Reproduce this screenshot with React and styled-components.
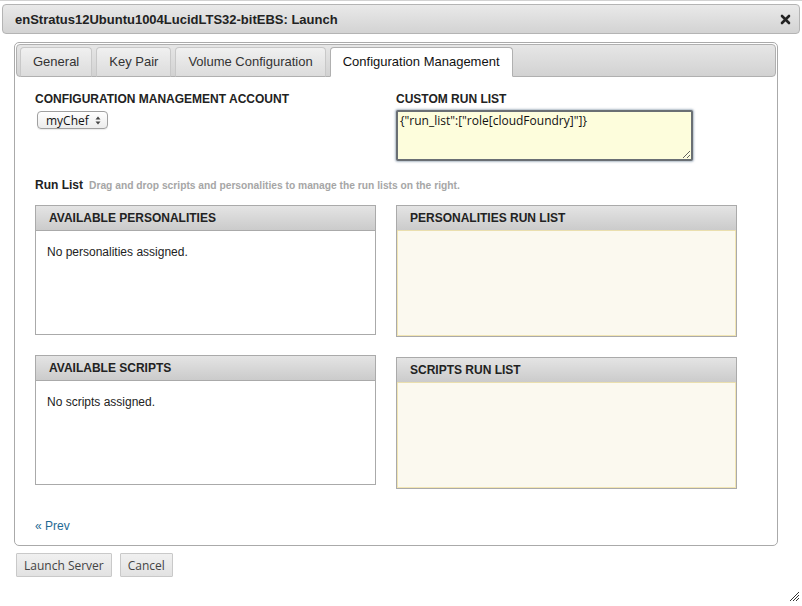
import React from "react";
import styled, { createGlobalStyle } from "styled-components";

const Global = createGlobalStyle`
  html, body { margin: 0; padding: 0; background: #fff; }
  body { font-family: "Liberation Sans", Arial, sans-serif; color: #222; }
  * { box-sizing: border-box; }
`;

const Dialog = styled.div`
  position: relative;
  width: 802px;
  height: 606px;
  border-top: 1px solid #d2d2d2;
  padding: 3px 2px 0;
  background: #fff;
  overflow: hidden;
`;

const TitleBar = styled.div`
  height: 30px;
  display: flex;
  align-items: center;
  justify-content: space-between;
  padding: 0 8px 0 12px;
  border: 1px solid #b4b4b4;
  border-radius: 4px;
  background: linear-gradient(#e9e9e9, #d3d3d3);
`;

const Title = styled.div`
  font-weight: bold;
  font-size: 13px;
  color: #222;
`;

const Body = styled.div`
  padding: 8px 0 0 12px;
`;

const TabPanel = styled.div`
  width: 764px;
  border: 1px solid #aaa;
  border-radius: 5px;
  padding: 1px;
`;

const TabStrip = styled.div`
  height: 33px;
  display: flex;
  gap: 4px;
  padding: 2px 3px 0;
  border: 1px solid #b0b0b0;
  border-radius: 4px;
  background: linear-gradient(#e6e6e6, #d2d2d2);
`;

const Tab = styled.div`
  height: 30px;
  margin-bottom: -1px;
  padding: 0 12px 1px;
  display: flex;
  align-items: center;
  font-size: 13px;
  color: ${(p) => (p.$active ? "#111" : "#333")};
  border: 1px solid ${(p) => (p.$active ? "#b0b0b0" : "#c8c8c8")};
  border-bottom-color: ${(p) => (p.$active ? "#fff" : "#b0b0b0")};
  border-radius: 4px 4px 0 0;
  background: ${(p) => (p.$active ? "#fff" : "linear-gradient(#f0f0f0, #dcdcdc)")};
`;

const TabContent = styled.div`
  padding: 15px 19px 10px 19px;
`;

const TwoCol = styled.div`
  display: grid;
  grid-template-columns: 341px 341px;
  column-gap: 20px;
  row-gap: ${(p) => p.$rowGap || 0}px;
  align-items: start;
`;

const Field = styled.div`
  display: flex;
  flex-direction: column;
  align-items: flex-start;
`;

const Label = styled.div`
  font-size: 12px;
  line-height: 14px;
  font-weight: bold;
  color: #222;
  margin-bottom: ${(p) => p.$gap}px;
`;

const SelectBox = styled.div`
  margin-left: 2px;
  height: 18px;
  width: 71px;
  display: flex;
  align-items: center;
  justify-content: space-between;
  padding: 0 6px 0 8px;
  border: 1px solid #a0a0a0;
  border-radius: 4px;
  background: linear-gradient(#ffffff, #ececec);
  box-shadow: 0 1px 1px rgba(0, 0, 0, 0.08);
  font-family: "Open Sans", "DejaVu Sans", sans-serif;
  font-size: 12px;
  color: #111;
`;

const TextArea = styled.textarea`
  width: 297px;
  height: 51px;
  margin: 0;
  padding: 1px 2px;
  border: 2px solid #6a6f74;
  border-radius: 2px;
  background: #fdfddc;
  box-shadow: 0 0 2px 1px rgba(120, 140, 160, 0.6);
  font-family: "Open Sans", "DejaVu Sans", sans-serif;
  font-size: 12px;
  line-height: 15px;
  color: #111;
  outline: none;
  resize: both;
`;

const RunHeading = styled.div`
  margin: 17px 0 12px;
  display: flex;
  align-items: baseline;
  gap: 6px;
  line-height: 14px;
`;

const RunTitle = styled.span`
  font-size: 12px;
  font-weight: bold;
  color: #222;
`;

const Hint = styled.span`
  font-size: 10.25px;
  font-weight: bold;
  color: #a6a6a6;
`;

const ListBox = styled.div`
  height: ${(p) => (p.$run ? 132 : 130)}px;
  margin-top: ${(p) => p.$shift || 0}px;
  border: 1px solid #aaa;
  display: flex;
  flex-direction: column;
  background: ${(p) => (p.$run ? "#fbf9ef" : "#fff")};
`;

const ListHeader = styled.div`
  height: 25px;
  flex: none;
  display: flex;
  align-items: center;
  padding-left: 13px;
  font-size: 12px;
  font-weight: bold;
  color: #222;
  background: linear-gradient(#e4e4e4, #cbcbcb);
  border-bottom: 1px solid ${(p) => (p.$run ? "#eadfae" : "#aaa")};
`;

const ListBody = styled.div`
  flex: 1;
  padding: 14px 11px;
  font-size: 12px;
  color: #222;
  box-shadow: ${(p) => (p.$run ? "inset 1px 0 0 #f2e6b4, inset -1px -1px 0 #f2e6b4" : "none")};
`;

const PrevLink = styled.a`
  display: inline-block;
  margin-top: 30px;
  font-size: 12px;
  line-height: 14px;
  color: #1f6a94;
  text-decoration: none;
`;

const ButtonRow = styled.div`
  display: flex;
  gap: 8px;
  margin: 7px 0 0 2px;
`;

const Button = styled.button`
  height: 24px;
  padding: 0 7px;
  border: 1px solid #c9c9c9;
  border-radius: 1px;
  background: linear-gradient(#f0f0f0, #e2e2e2);
  font-family: "Open Sans", "DejaVu Sans", sans-serif;
  font-size: 12px;
  color: #444;
`;

const Grip = styled.svg`
  position: absolute;
  right: 2px;
  bottom: 4px;
`;

const tabs = ["General", "Key Pair", "Volume Configuration", "Configuration Management"];

const Arrows = () => (
  <svg width="6" height="9" viewBox="0 0 6 9">
    <path d="M0.5 3.5 L3 0.5 L5.5 3.5 Z" fill="#444" />
    <path d="M0.5 5.5 L3 8.5 L5.5 5.5 Z" fill="#444" />
  </svg>
);

export default function App() {
  return (
    <Dialog>
      <Global />
      <TitleBar>
        <Title>enStratus12Ubuntu1004LucidLTS32-bitEBS: Launch</Title>
        <svg width="11" height="11" viewBox="0 0 11 11">
          <path d="M2 2 L9 9 M9 2 L2 9" stroke="#222" strokeWidth="2.6" strokeLinecap="round" />
        </svg>
      </TitleBar>
      <Body>
        <TabPanel>
          <TabStrip>
            {tabs.map((t, i) => (
              <Tab key={t} $active={i === 3}>{t}</Tab>
            ))}
          </TabStrip>
          <TabContent>
            <TwoCol>
              <Field>
                <Label $gap={5}>CONFIGURATION MANAGEMENT ACCOUNT</Label>
                <SelectBox>
                  <span>myChef</span>
                  <Arrows />
                </SelectBox>
              </Field>
              <Field>
                <Label $gap={4}>CUSTOM RUN LIST</Label>
                <TextArea defaultValue={'{"run_list":["role[cloudFoundry]"]}'} />
              </Field>
            </TwoCol>
            <RunHeading>
              <RunTitle>Run List</RunTitle>
              <Hint>Drag and drop scripts and personalities to manage the run lists on the right.</Hint>
            </RunHeading>
            <TwoCol $rowGap={18}>
              <ListBox>
                <ListHeader>AVAILABLE PERSONALITIES</ListHeader>
                <ListBody>No personalities assigned.</ListBody>
              </ListBox>
              <ListBox $run>
                <ListHeader $run>PERSONALITIES RUN LIST</ListHeader>
                <ListBody $run />
              </ListBox>
              <ListBox>
                <ListHeader>AVAILABLE SCRIPTS</ListHeader>
                <ListBody>No scripts assigned.</ListBody>
              </ListBox>
              <ListBox $run $shift={2}>
                <ListHeader $run>SCRIPTS RUN LIST</ListHeader>
                <ListBody $run />
              </ListBox>
            </TwoCol>
            <PrevLink href="#">« Prev</PrevLink>
          </TabContent>
        </TabPanel>
        <ButtonRow>
          <Button>Launch Server</Button>
          <Button>Cancel</Button>
        </ButtonRow>
      </Body>
      <Grip width="11" height="11" viewBox="0 0 11 11">
        <path d="M1 10 L10 1 M4 10 L10 4 M7 10 L10 7" stroke="#333" strokeWidth="1" />
      </Grip>
    </Dialog>
  );
}
